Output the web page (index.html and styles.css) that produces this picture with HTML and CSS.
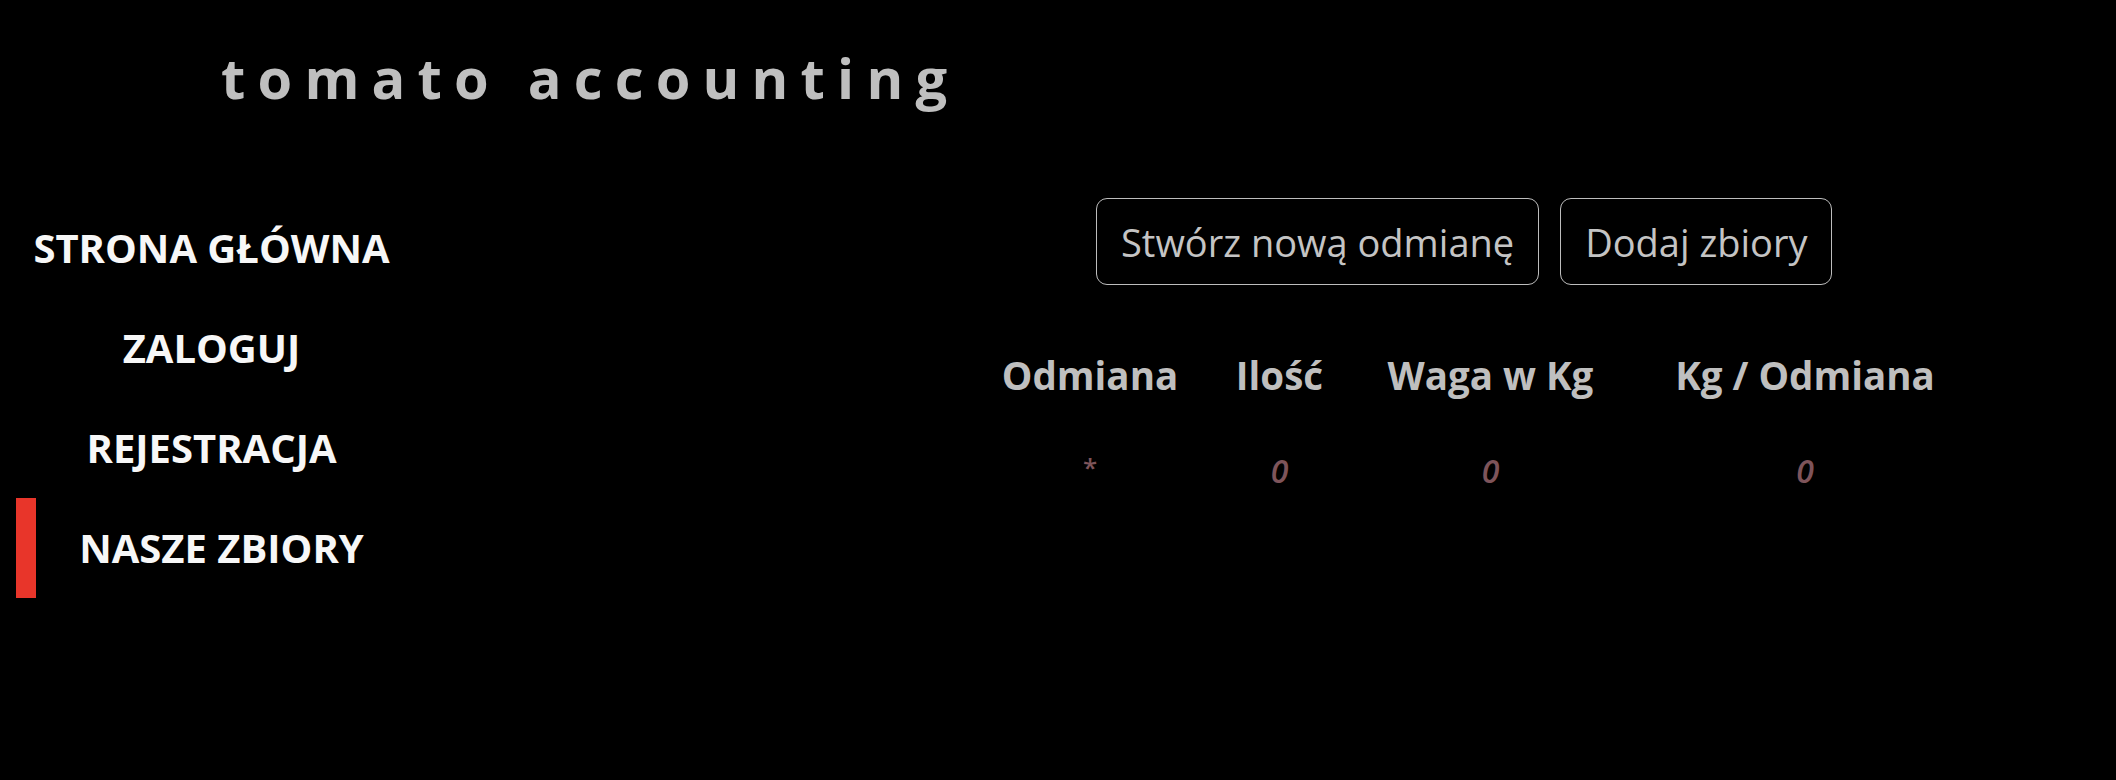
FILE: index.html
```html
<!DOCTYPE html>
<html lang="pl">
<head>
<meta charset="utf-8">
<title>tomato accounting</title>
<link rel="stylesheet" href="styles.css">
</head>
<body>
<header class="top">
  <h1 class="brand">tomato accounting</h1>
</header>
<div class="layout">
  <nav class="side">
    <a class="nav-item" href="#">STRONA GŁÓWNA</a>
    <a class="nav-item" href="#">ZALOGUJ</a>
    <a class="nav-item" href="#">REJESTRACJA</a>
    <a class="nav-item active" href="#">NASZE ZBIORY</a>
  </nav>
  <main class="content">
    <div class="actions">
      <button class="btn">Stwórz nową odmianę</button>
      <button class="btn">Dodaj zbiory</button>
    </div>
    <div class="table">
      <div class="th">Odmiana</div>
      <div class="th">Ilość</div>
      <div class="th">Waga w Kg</div>
      <div class="th">Kg / Odmiana</div>
      <div class="td star">*</div>
      <div class="td">0</div>
      <div class="td">0</div>
      <div class="td">0</div>
    </div>
  </main>
</div>
</body>
</html>
```
FILE: styles.css
```css
html, body {
  margin: 0;
  padding: 0;
  background: #000;
}
body {
  font-family: "Open Sans", "Noto Sans", "DejaVu Sans", sans-serif;
  color: #fff;
  width: 2116px;
  height: 780px;
  overflow: hidden;
}
.top {
  padding: 42px 0 0 221px;
  height: 156px;
  box-sizing: border-box;
}
.brand {
  margin: 0;
  font-size: 56px;
  line-height: 70px;
  font-weight: 700;
  letter-spacing: 12.2px;
  color: #bfbfbf;
  white-space: nowrap;
}
.layout {
  display: flex;
  padding-top: 42px;
}
.side {
  margin-left: 16px;
  width: 391px;
  display: flex;
  flex-direction: column;
}
.nav-item {
  display: block;
  height: 100px;
  line-height: 100px;
  text-align: center;
  font-size: 40px;
  font-weight: 700;
  color: #f7f7f7;
  text-decoration: none;
  white-space: nowrap;
  box-sizing: border-box;
}
.nav-item.active {
  border-left: 20px solid #e8352a;
}
.content {
  flex: 1;
  display: flex;
  flex-direction: column;
}
.actions {
  display: flex;
  gap: 21px;
  margin-left: 689px;
}
.btn {
  height: 87px;
  padding: 0 24px;
  background: #000;
  border: 1.5px solid #bdbdbd;
  border-radius: 11px;
  color: #c4c4c4;
  font-family: inherit;
  font-size: 38px;
  line-height: 84px;
  font-weight: 400;
  white-space: nowrap;
}
.table {
  margin-left: 567px;
  margin-top: 62px;
  display: grid;
  grid-template-columns: 232px 147px 275px 354px;
  grid-template-rows: 56px 96px;
}
.th {
  text-align: center;
  font-size: 38.5px;
  line-height: 56px;
  font-weight: 700;
  color: #bfbfbf;
  white-space: nowrap;
}
.td {
  text-align: center;
  padding-top: 40px;
  font-size: 32px;
  line-height: 56px;
  font-weight: 600;
  font-style: italic;
  color: #7e545a;
}
.td.star {
  font-size: 26px;
  font-style: normal;
  font-weight: 600;
  line-height: 48px;
}
```
